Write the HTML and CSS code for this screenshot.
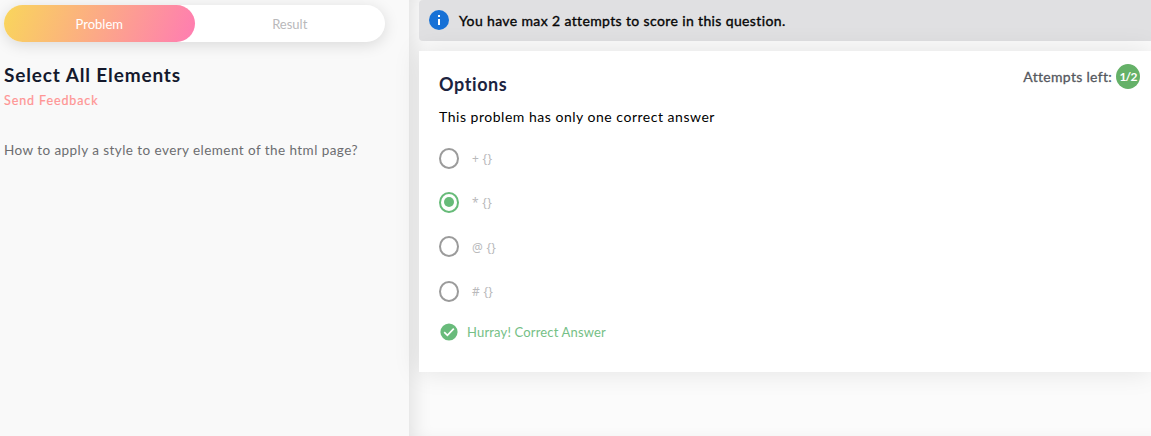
FILE: index.html
```html
<!DOCTYPE html>
<html lang="en">
<head>
<meta charset="utf-8">
<title>Select All Elements</title>
<link rel="stylesheet" href="styles.css">
</head>
<body>
<div class="page">
  <aside class="problem">
    <nav class="tabs">
      <span class="tab tab-active">Problem</span>
      <span class="tab">Result</span>
    </nav>
    <h1 class="title">Select All Elements</h1>
    <a class="feedback">Send Feedback</a>
    <p class="question">How to apply a style to every element of the html page?</p>
  </aside>
  <main class="answers">
    <div class="notice">
      <svg class="info" viewBox="0 0 20 20"><circle cx="10" cy="10" r="10" fill="#1771d6"/><path d="M9 5h2v2H9zM9 9h2v6H9z" fill="#fff"/></svg>
      <span class="notice-text">You have max 2 attempts to score in this question.</span>
    </div>
    <section class="card">
      <header class="card-head">
        <h2 class="heading">Options</h2>
        <div class="attempts"><span class="attempts-label">Attempts left:</span><span class="badge">1/2</span></div>
      </header>
      <p class="hint">This problem has only one correct answer</p>
      <div class="options">
        <label class="option"><span class="radio"></span><span class="code">+ {}</span></label>
        <label class="option"><span class="radio radio-on"></span><span class="code">* {}</span></label>
        <label class="option"><span class="radio"></span><span class="code">@ {}</span></label>
        <label class="option"><span class="radio"></span><span class="code">&#35; {}</span></label>
      </div>
      <div class="result">
        <svg class="check" viewBox="0 0 18 18"><circle cx="9" cy="9" r="8.6" fill="#69bb7b"/><path d="M4.2 9.2l3.2 3.1 6.4-6.6" fill="none" stroke="#fff" stroke-width="1.7"/></svg>
        <span class="result-text">Hurray! Correct Answer</span>
      </div>
    </section>
  </main>
</div>
</body>
</html>
```
FILE: styles.css
```css
* { box-sizing: border-box; }
body { margin: 0; font-family: Lato, "Open Sans", sans-serif; background: #fbfbfb; }
h1, h2, p { margin: 0; }
.page { display: flex; height: 436px; overflow: hidden; }
.problem { width: 409px; padding: 5px 24px 0 4px; background: #f9f9f9; display: flex; flex-direction: column; }
.tabs { display: flex; height: 37px; border-radius: 19px; background: #fff; box-shadow: 0 3px 15px rgba(0,0,0,.13); }
.tab { flex: 1; display: flex; align-items: center; justify-content: center; border-radius: 19px; font-size: 13px; color: #b9b9bb; }
.tab-active { color: #fff; background: linear-gradient(110deg, #f9d65b, #ff7cb2); }
.title { margin-top: 20px; font-size: 19px; line-height: 26px; font-weight: 700; color: #14192d; letter-spacing: .86px; white-space: nowrap; }
.feedback { margin-top: 5px; font-size: 12.5px; line-height: 16px; color: #ff9595; -webkit-text-stroke: .2px #ff9595; letter-spacing: .9px; }
.question { margin-top: 31px; font-size: 13.5px; line-height: 20px; color: #6c6d70; letter-spacing: .44px; white-space: nowrap; }
.answers { flex: 1; min-width: 0; padding-left: 10px; box-shadow: inset 13px 0 18px -8px rgba(0,0,0,.1); }
.notice { display: flex; align-items: center; gap: 10px; height: 41px; padding: 0 0 1px 10px; background: #e0e0e2; border-radius: 4px 0 0 4px; }
.info { width: 20px; height: 20px; }
.notice-text { font-size: 14px; color: #050505; letter-spacing: .37px; -webkit-text-stroke: .35px #050505; white-space: nowrap; }
.card { height: 321px; margin-top: 10px; padding: 13px 11px 0 20px; background: #fff; box-shadow: 0 0 25px rgba(0,0,0,.1); }
.card-head { display: flex; justify-content: space-between; height: 43px; }
.heading { padding-top: 8px; font-size: 18px; line-height: 25px; font-weight: 700; color: #1c2340; letter-spacing: .6px; }
.attempts { display: flex; align-items: center; height: 25px; gap: 4px; }
.attempts-label { font-size: 14px; color: #55585e; letter-spacing: .3px; -webkit-text-stroke: .3px #55585e; }
.badge { display: flex; align-items: center; justify-content: center; width: 24px; height: 25px; border-radius: 50%; background: #65b168; color: #fff; font-size: 12px; font-weight: 700; letter-spacing: -.8px; }
.hint { font-size: 14px; line-height: 20px; color: #000; letter-spacing: .52px; }
.options { margin-top: 9px; }
.option { display: flex; align-items: center; gap: 13px; height: 44.3px; }
.radio { display: flex; width: 20px; height: 21px; border: 2px solid #9b9b9b; border-radius: 50%; }
.radio-on { border-color: #67bb79; align-items: center; justify-content: center; }
.radio-on::after { content: ""; width: 10px; height: 10px; border-radius: 50%; background: #67bb79; }
.code { padding-top: 1px; font-family: "Noto Sans", sans-serif; font-size: 12px; letter-spacing: .3px; color: #b9b9bb; }
.result { display: flex; align-items: center; gap: 9px; height: 18px; margin-top: 10px; padding-left: 1px; }
.check { width: 18px; height: 18px; }
.result-text { font-size: 13px; color: #75c086; letter-spacing: .16px; }
```
